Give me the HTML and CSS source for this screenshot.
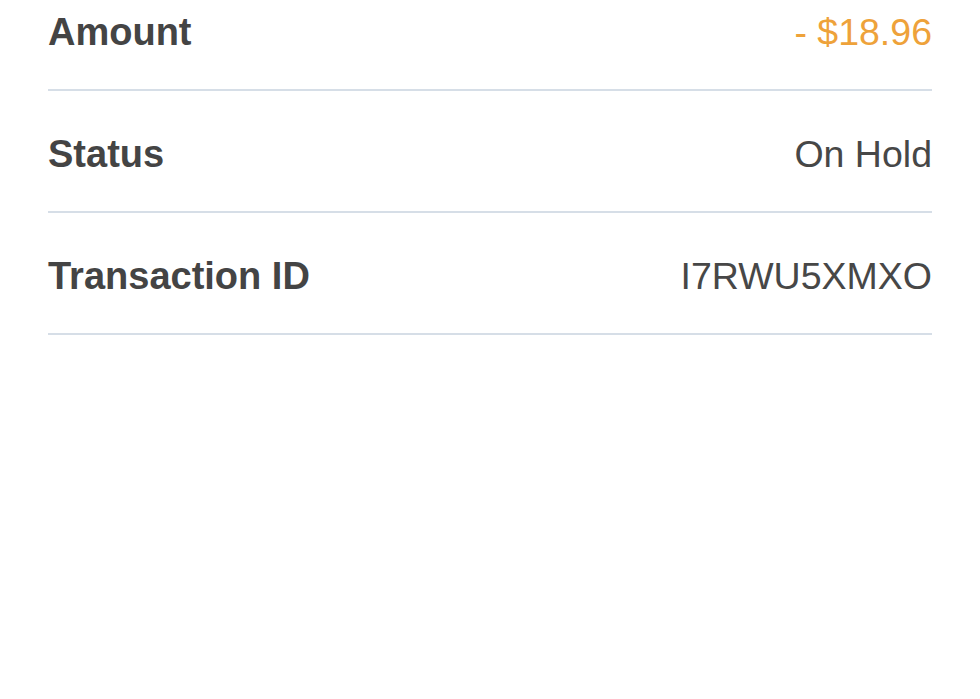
FILE: index.html
```html
<!DOCTYPE html>
<html lang="en">
<head>
<meta charset="utf-8">
<title>Transaction details</title>
<link rel="stylesheet" href="styles.css">
</head>
<body>
<main class="details">
  <div class="row">
    <span class="label">Amount</span>
    <span class="value value-amount">- $18.96</span>
  </div>
  <div class="row">
    <span class="label">Status</span>
    <span class="value">On Hold</span>
  </div>
  <div class="row">
    <span class="label">Transaction ID</span>
    <span class="value">I7RWU5XMXO</span>
  </div>
</main>
</body>
</html>
```
FILE: styles.css
```css
html, body {
  margin: 0;
  padding: 0;
  background: #ffffff;
}
body {
  font-family: "Liberation Sans", Arial, Helvetica, sans-serif;
  color: #444444;
  height: 699px;
  overflow: hidden;
}
.details {
  margin-top: -31px;
  padding: 0 48px;
  display: flex;
  flex-direction: column;
}
.row {
  box-sizing: border-box;
  height: 122px;
  padding-top: 6px;
  border-bottom: 2px solid #d6dee7;
  display: flex;
  align-items: center;
  justify-content: space-between;
}
.label {
  font-size: 38px;
  font-weight: bold;
  color: #444444;
}
.value {
  font-size: 37.5px;
  color: #474747;
}
.value-amount {
  color: #eea23a;
}
```
